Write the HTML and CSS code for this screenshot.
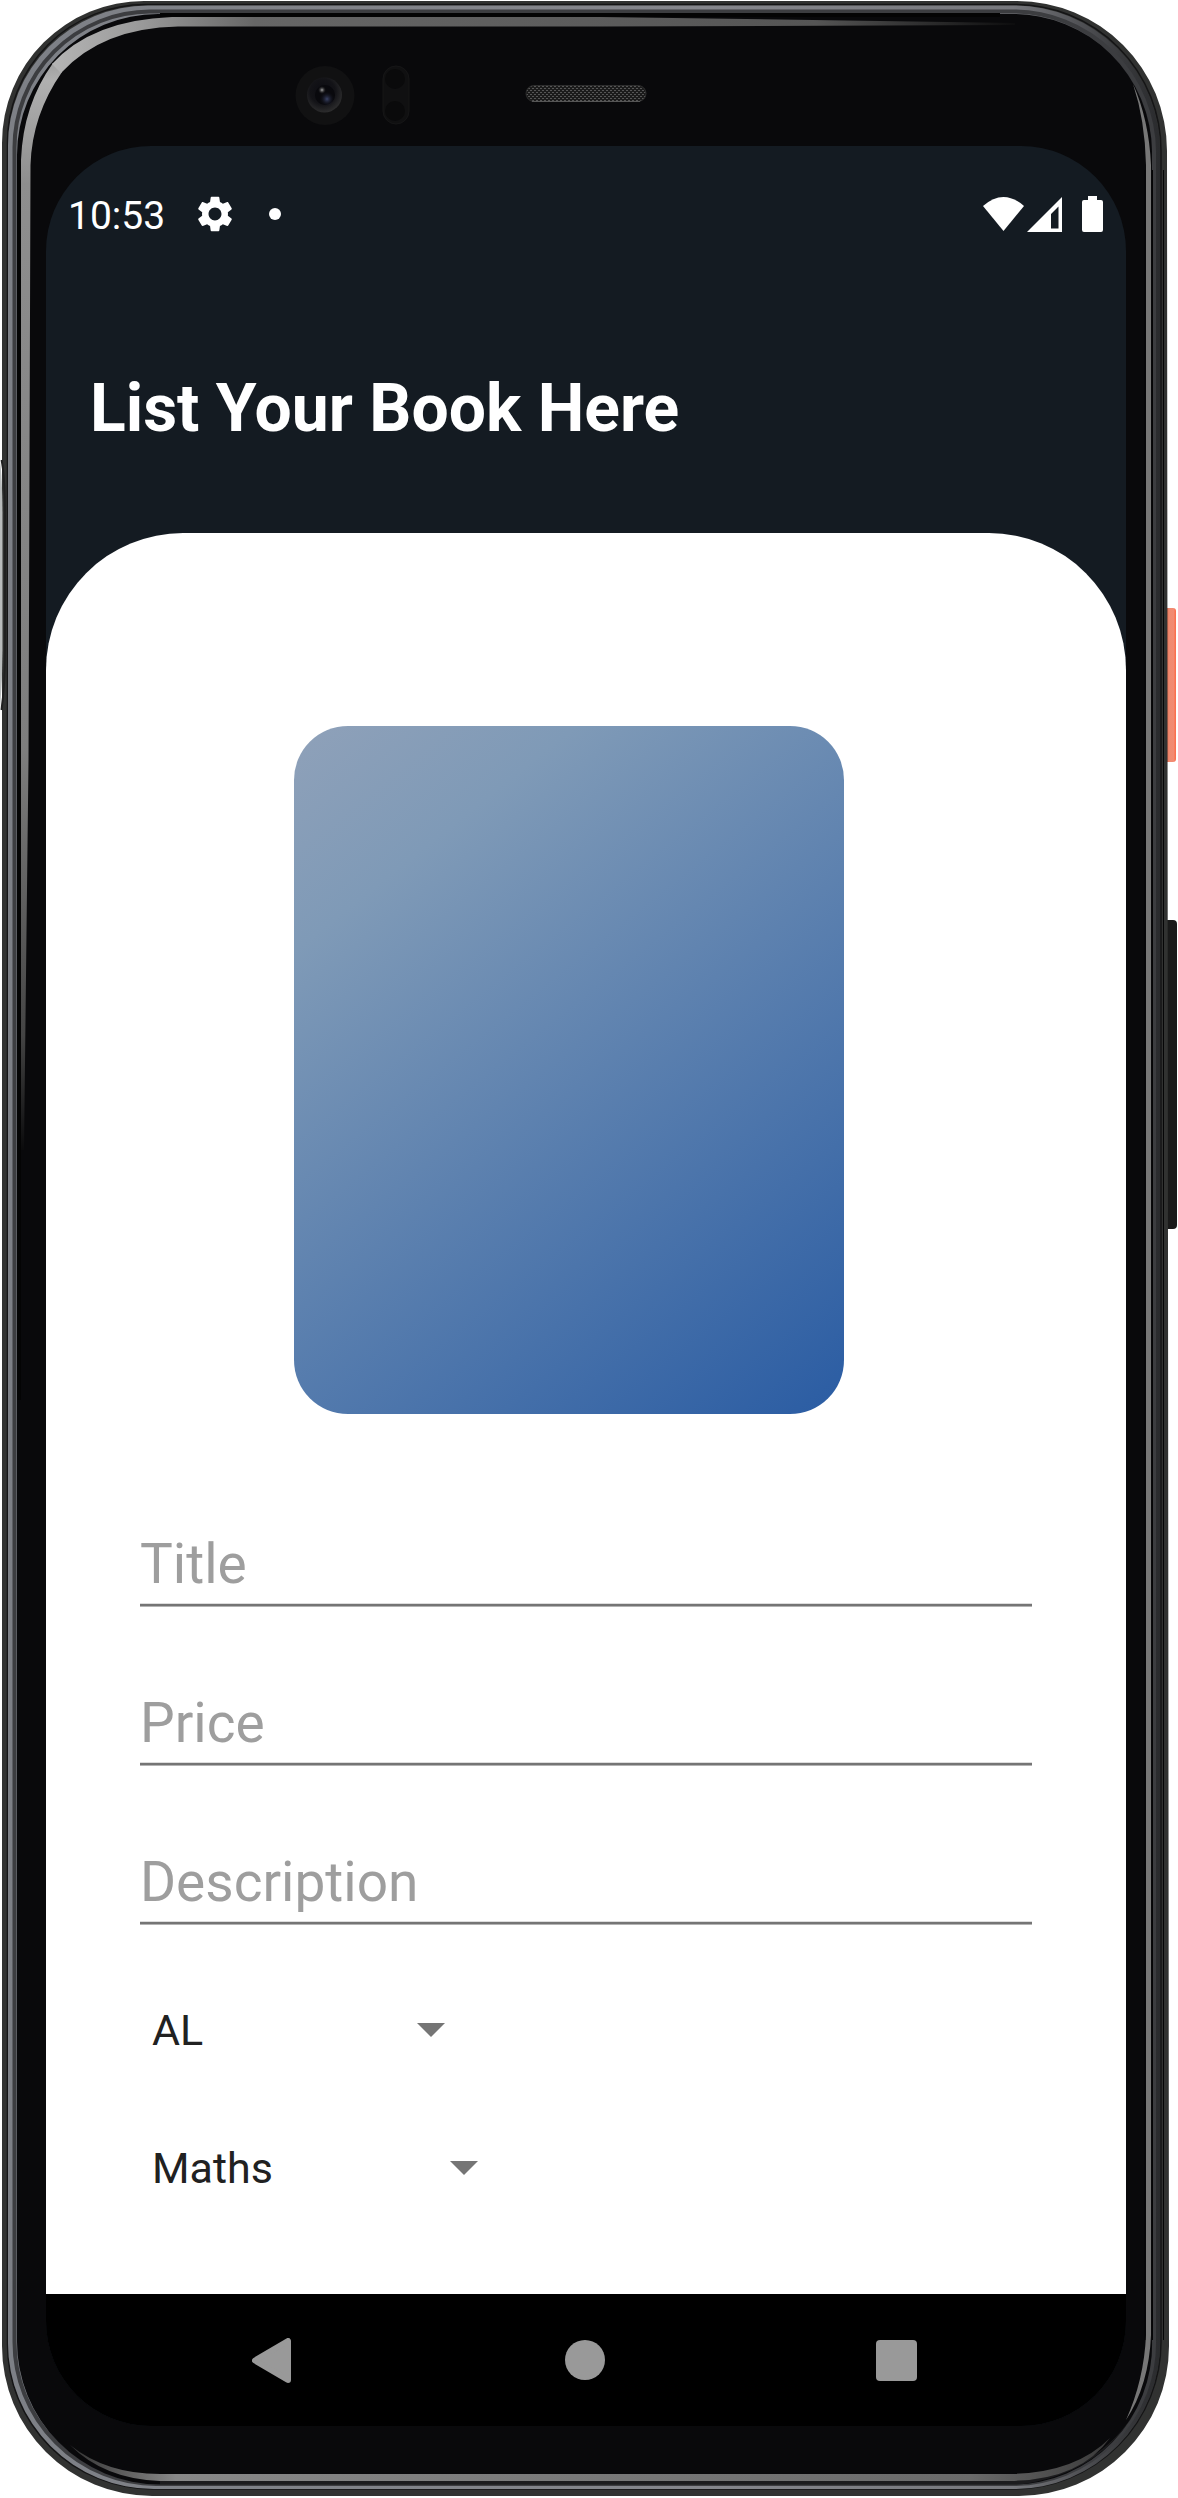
FILE: index.html
```html
<!DOCTYPE html>
<html lang="en">
<head>
<meta charset="utf-8">
<title>List Your Book</title>
<link rel="stylesheet" href="styles.css">
</head>
<body>
<div class="phone">
  <svg class="frame" viewBox="0 0 1178 2498" aria-hidden="true">
    <defs>
      <linearGradient id="ring" x1="0" y1="0" x2="1178" y2="0" gradientUnits="userSpaceOnUse">
        <stop offset="0" stop-color="#7d8086"/><stop offset=".6" stop-color="#85868c"/><stop offset=".86" stop-color="#77787d"/><stop offset=".95" stop-color="#3a3b3e"/><stop offset="1" stop-color="#232426"/>
      </linearGradient>
      <linearGradient id="shineLeft" x1="0" y1="0" x2="0" y2="1150" gradientUnits="userSpaceOnUse">
        <stop offset="0" stop-color="#666"/><stop offset=".07" stop-color="#b0b0b0"/><stop offset=".16" stop-color="#8e8e8e"/><stop offset=".65" stop-color="#7e7e7e"/><stop offset=".9" stop-color="#444"/><stop offset="1" stop-color="#0b0b0c"/>
      </linearGradient>
      <linearGradient id="shineTop" x1="0" y1="0" x2="1020" y2="0" gradientUnits="userSpaceOnUse">
        <stop offset=".04" stop-color="#b8b8b8"/><stop offset=".14" stop-color="#999"/><stop offset=".25" stop-color="#666"/><stop offset=".8" stop-color="#555"/><stop offset="1" stop-color="#0b0b0c"/>
      </linearGradient>
      <linearGradient id="shineBottom" x1="70" y1="0" x2="1130" y2="0" gradientUnits="userSpaceOnUse">
        <stop offset="0" stop-color="#333"/><stop offset=".1" stop-color="#888"/><stop offset=".85" stop-color="#6a6a6a"/><stop offset="1" stop-color="#333"/>
      </linearGradient>
      <linearGradient id="power" x1="1166" y1="0" x2="1176" y2="0" gradientUnits="userSpaceOnUse">
        <stop offset="0" stop-color="#e0603f"/><stop offset=".3" stop-color="#f08a70"/><stop offset=".75" stop-color="#f28b72"/><stop offset="1" stop-color="#fc6a48"/>
      </linearGradient>
      <radialGradient id="lens" cx=".45" cy=".4" r=".6">
        <stop offset="0" stop-color="#0c0c12"/><stop offset=".6" stop-color="#131317"/><stop offset="1" stop-color="#2c2c2d"/>
      </radialGradient>
      <radialGradient id="blue"><stop offset="0" stop-color="#3b4468"/><stop offset="1" stop-color="#0d0d14" stop-opacity="0"/></radialGradient>
      <radialGradient id="glint"><stop offset="0" stop-color="#aaa"/><stop offset="1" stop-color="#222" stop-opacity="0"/></radialGradient>
      <pattern id="mesh" width="4" height="4" patternUnits="userSpaceOnUse">
        <rect width="4" height="4" fill="#1b1b1b"/><rect width="2" height="1" fill="#555"/><rect x="2" y="2" width="2" height="1" fill="#555"/>
      </pattern>
    </defs>
    <rect x="1160" y="920" width="17" height="309" rx="4" fill="#1a1a1a"/>
    <rect x="1160" y="608" width="16" height="154" rx="3" fill="url(#power)"/>
    <path fill="#313231" d="M144 1H1017A150 150 0 0 1 1167 151L1169 2346A150 150 0 0 1 1019 2496H152A150 150 0 0 1 2 2346V143A142 142 0 0 1 144 1Z"/>
    <path fill="none" stroke="#151516" stroke-width="1.5" d="M146 4.500H1015A146 146 0 0 1 1161 151V2342A147 147 0 0 1 1015 2489H152A145 145 0 0 1 7.500 2344V143A138 138 0 0 1 146 4.500"/>
    <path fill="url(#ring)" d="M148 5.500H1014A146 146 0 0 1 1160 151V2341A146 146 0 0 1 1014 2489H154A146 146 0 0 1 8 2343V146A140 140 0 0 1 148 5.500Z"/>
    <path fill="none" stroke="#3c3d40" stroke-width="4" d="M150 11.500H1013A141 141 0 0 1 1154 151V2340A141 141 0 0 1 1013 2484H156A142 142 0 0 1 14.500 2342V148A136 136 0 0 1 150 11.500Z"/>
    <path fill="#09090b" d="M158 14H1012A139 139 0 0 1 1152 152V2340A140 140 0 0 1 1012 2484.500H160A143 143 0 0 1 17 2340V155A141 141 0 0 1 158 14Z"/>
    <path fill="#2a2a2b" d="M160 2481H1016Q1100 2472 1136 2410Q1100 2475 1016 2485H160Z" opacity=".6"/>
    <path fill="#040404" d="M17 160H21V1400H17ZM160 13H1000V17H160Z"/>
    <path fill="url(#shineLeft)" d="M21 1150V160Q23 105 53 63L62 72Q32 115 30.500 165L28.500 760L24 1150Z"/>
    <path fill="url(#shineTop)" d="M52 64Q92 20 172 17H600L1015 23V25L600 26.500H178Q102 28 61 73Z"/>
    <path fill="#777" d="M1133 84Q1145 120 1146 165V2335Q1144 2380 1126 2420Q1149 2385 1151 2335V165Q1149 120 1133 84Z"/>
    <path fill="none" stroke="#050506" d="M1145 170V2340M1152.500 170V2340M1163.500 170V2340"/>
    <path fill="url(#shineBottom)" d="M70 2445Q106 2474 160 2474H1010Q1075 2473 1110 2438Q1080 2480 1010 2481H160Q104 2479 70 2445Z"/>
    <path fill="none" stroke="#202020" stroke-width="2" d="M1.500 460Q5 475 5 520V650Q5 685 1.500 710"/>
    <path fill="#b9bcbc" d="M0 460Q2.500 480 2.500 520V650Q2.500 680 0 710Z"/>

    <circle cx="325" cy="95.500" r="29.500" fill="#111112"/>
    <circle cx="324.500" cy="95" r="17.500" fill="url(#lens)"/>
    <circle cx="325" cy="95" r="10" fill="#09090d"/>
    <circle cx="327" cy="99" r="7.500" fill="url(#blue)"/>
    <circle cx="322" cy="90" r="4" fill="url(#glint)"/>
    <rect x="383" y="66" width="26" height="58" rx="13" fill="#101011" stroke="#161617"/>
    <circle cx="395" cy="79" r="10" fill="#0a0a0b"/><circle cx="395" cy="111" r="10" fill="#0a0a0b"/>
    <rect x="526" y="85.500" width="120" height="16" rx="8" fill="url(#mesh)" stroke="#2d2d2d"/>
    <path d="M532 101.500H640" stroke="#555"/>
  </svg>

  <main class="screen">
    <header class="status-bar">
      <span class="clock">10:53</span>
      <svg class="gear" viewBox="2 2 20 20"><path fill="#fff" d="M19.140 12.940c.04-.3.060-.61.060-.94 0-.32-.02-.64-.07-.94l2.030-1.580c.18-.14.230-.41.120-.61l-1.920-3.320c-.12-.22-.37-.29-.59-.22l-2.390.96c-.5-.38-1.030-.7-1.620-.94L14.400 2.810c-.04-.24-.24-.41-.48-.41h-3.840c-.24 0-.43.170-.47.410L9.250 5.350C8.660 5.590 8.120 5.920 7.630 6.290L5.240 5.330c-.22-.08-.47 0-.59.220L2.740 8.870c-.12.210-.08.470.12.610l2.030 1.580c-.05.3-.09.630-.09.940s.02.640.07.940l-2.030 1.580c-.18.140-.23.410-.12.610l1.920 3.320c.12.220.37.290.59.220l2.390-.96c.5.380 1.030.7 1.620.94l.36 2.540c.05.240.24.410.48.410h3.840c.24 0 .44-.17.470-.41l.36-2.540c.59-.24 1.130-.56 1.620-.94l2.390.96c.22.080.47 0 .59-.22l1.920-3.320c.12-.22.070-.47-.12-.61l-2.010-1.580zM12 15.600c-1.980 0-3.600-1.620-3.600-3.600s1.620-3.600 3.600-3.600 3.600 1.620 3.600 3.600-1.620 3.600-3.600 3.600z"/></svg>
      <span class="dot"></span>
      <svg class="signals" viewBox="0 0 121 36"><g fill="#fff"><path d="M0 10Q20.500-8 41 10L20.500 35Z"/><path fill-rule="evenodd" d="M44 36L79 1V36ZM68 18V32.500H75.500V10.500Z"/><path d="M105 0H114V4H118Q120 4 120 6V34Q120 36 118 36H101Q99 36 99 34V6Q99 4 101 4H105Z"/></g></svg>
    </header>
    <h1 class="heading">List Your Book Here</h1>
    <section class="sheet">
      <div class="cover"></div>
      <form class="form">
        <div class="field">Title</div>
        <div class="field">Price</div>
        <div class="field">Description</div>
        <div class="spinner spinner-level"><span>AL</span><i class="caret"></i></div>
        <div class="spinner spinner-subject"><span>Maths</span><i class="caret"></i></div>
      </form>
    </section>
    <nav class="nav-bar">
      <svg class="back" viewBox="0 0 39 45"><path d="M3 22.500L36 3V42Z" fill="#999" stroke="#999" stroke-width="6" stroke-linejoin="round"/></svg>
      <span class="home"></span>
      <span class="recent"></span>
    </nav>
  </main>
</div>
</body>
</html>
```
FILE: styles.css
```css
* { box-sizing: border-box; }
body { margin: 0; background: #fff; font-family: Roboto, sans-serif; }
.phone { position: relative; width: 1178px; height: 2498px; padding: 146px 52px 72px 46px; overflow: hidden; }
.frame { position: absolute; inset: 0; width: 1178px; height: 2498px; }
.screen {
  position: relative;
  display: flex;
  flex-direction: column;
  width: 1080px;
  height: 2280px;
  overflow: hidden;
  border-radius: 105px;
  background: #141b22;
}
.status-bar { display: flex; align-items: center; flex: none; height: 135px; padding: 0 22px; color: #fff; }
.clock { width: 129px; padding-top: 5px; font-size: 39px; line-height: 44px; }
.gear { width: 36px; height: 36px; }
.dot { width: 12px; height: 12px; margin-left: 36px; border-radius: 50%; background: #fff; }
.signals { width: 121px; height: 36px; margin-left: auto; }
.heading { flex: none; margin: 95px 0 91px 44px; color: #fff; font-size: 66px; font-weight: 700; line-height: 66px; white-space: nowrap; }
.sheet { flex: 1; padding-top: 193px; border-radius: 137px 137px 0 0; background: #fff; }
.cover { width: 550px; height: 688px; margin-left: 248px; border-radius: 54px; background: linear-gradient(141.400deg, #8fa1b9 0%, #7f9ab7 20%, #2a5ca3 100%); }
.form { margin: 34px 94px 0; }
.field {
  display: flex;
  align-items: flex-end;
  height: 159px;
  padding-bottom: 13px;
  background: linear-gradient(#ddd 1px, #757575 1px 3px, #b3b3b3 3px) bottom / 100% 4px no-repeat;
  color: #9e9e9e;
  font-size: 55px;
  line-height: 60px;
}
.spinner { display: flex; align-items: center; justify-content: space-between; height: 138px; padding-left: 12px; color: #212121; font-size: 43px; }
.spinner-level { width: 305px; margin-top: 36px; }
.spinner-subject { width: 338px; }
.caret { width: 28px; height: 14px; background: #757575; clip-path: polygon(0 0, 100% 0, 50% 100%); }
.nav-bar { display: flex; align-items: center; justify-content: space-between; flex: none; height: 132px; padding: 0 209px 0 206px; background: #000; }
.back { width: 39px; height: 45px; }
.home { width: 40px; height: 40px; margin-left: 2px; border-radius: 50%; background: #999; }
.recent { width: 41px; height: 41px; border-radius: 4px; background: #999; }
```
